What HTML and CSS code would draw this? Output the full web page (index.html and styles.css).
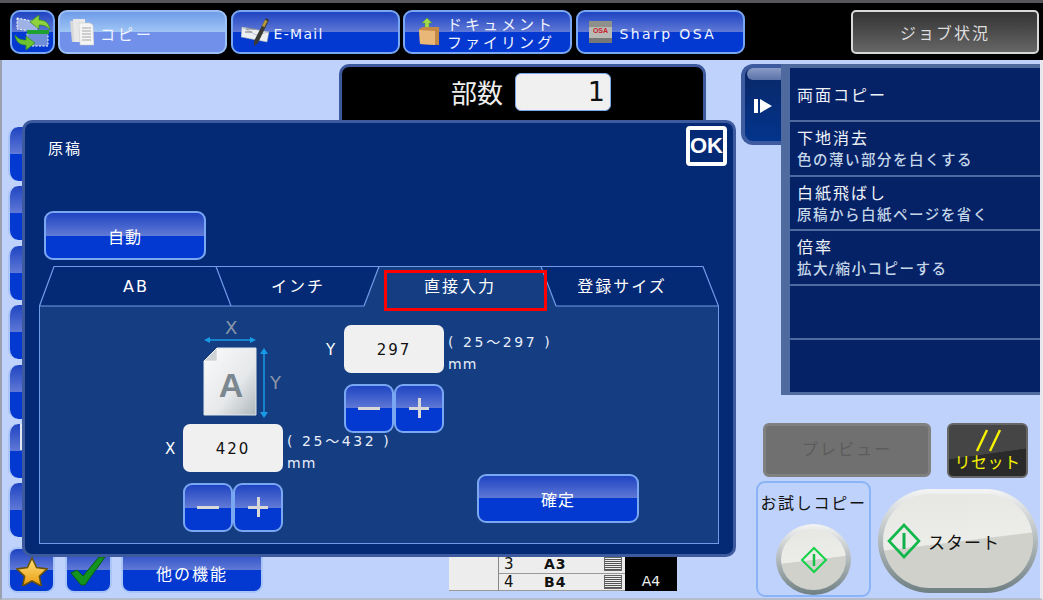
FILE: index.html
```html
<!DOCTYPE html>
<html lang="ja">
<head>
    <meta charset="UTF-8">
    <title>原稿 - 直接入力</title>
    <link rel="stylesheet" href="styles.css">
</head>
<body>
<div class="screen">
    <div class="strip"></div>
    <header class="topbar">
        <button class="gloss swap">
            <svg width="39" height="38" viewBox="0 0 39 38">
                <path d="M4 5l20 4v10L4 16z" fill="#9fb2e6" stroke="#fff" stroke-dasharray="2 1.500"/>
                <path d="M14 19h21v14H14z" fill="#6f8ed8" stroke="#fff" stroke-dasharray="2 1.500"/>
                <path d="M14 17h22v4H14z" fill="#1fa12f"/>
                <path d="M37 17C36 9 31 7 26 7V2l-9 7 9 7v-4c5 0 8 1 11 5z" fill="#8fd23c" stroke="#2f8a1f" stroke-width=".7"/>
                <path d="M2 22c1 8 6 10 11 10v5l9-7-9-7v4c-5 0-8-1-11-5z" fill="#6cc22f" stroke="#2f8a1f" stroke-width=".7"/>
            </svg>
        </button>
        <button class="gloss tab active">
            <svg width="26" height="28" viewBox="0 0 26 28">
                <path d="M2 3l11-1 2 21-11 1z" fill="#d8d8d8"/>
                <path d="M5 1h12l1 23H6z" fill="#e8e8e8"/>
                <path d="M11 5h11l3 2 1 20H12z" fill="#f4f4f4" stroke="#c4c4c4" stroke-width=".5"/>
                <path d="M14 10h9M14 13h9M14 16h9M14 19h9M14 22h9" stroke="#a8a8a8"/>
            </svg>
            <span class="tab-label copy-label">コピー</span>
        </button>
        <button class="gloss tab">
            <svg width="30" height="28" viewBox="0 0 30 28">
                <path d="M1 9l27 5-2 10-26-5z" fill="#eceff2" stroke="#9aa" stroke-width=".5"/>
                <path d="M1 9l14 8 13-3" fill="none" stroke="#aab" stroke-width=".7"/>
                <path d="M5 11h9M4 14h7" stroke="#777"/>
                <path d="M25 0l3 2-11 23-4 3 0-5z" fill="#3a3a34"/>
                <path d="M24 2l2.500 1-3 6-2.500-1z" fill="#b99a3a"/>
            </svg>
            <span class="tab-label mail-label">E-Mail</span>
        </button>
        <button class="gloss tab">
            <svg class="folder" width="22" height="30" viewBox="0 0 22 30">
                <path d="M9 1l5 5h-3v6H7V6H4z" fill="#a3d84a" stroke="#5c9a2c" stroke-width=".5"/>
                <path d="M1 12l4-2h16v18L2 27z" fill="#c48a45"/>
                <path d="M1 13l16 1v14L2 27z" fill="#e9b777"/>
            </svg>
            <span class="tab-label two-line">ドキュメント<br>ファイリング</span>
        </button>
        <button class="gloss tab">
            <svg class="osa" width="23" height="22" viewBox="0 0 23 22">
                <rect width="23" height="22" fill="#b9b9b6"/>
                <rect width="23" height="6" fill="#8f8f8c"/>
                <rect y="17" width="23" height="5" fill="#777"/>
                <text x="11.5" y="12" class="osa-mark">OSA</text>
            </svg>
            <span class="tab-label osa-label">Sharp OSA</span>
        </button>
        <button class="job">ジョブ状況</button>
    </header>

    <main class="main">
        <section class="left">
            <div class="side-list">
                <div class="gloss side"></div>
                <div class="gloss side"></div>
                <div class="gloss side"></div>
                <div class="gloss side"></div>
                <div class="gloss side"></div>
                <div class="gloss side peek"></div>
                <div class="gloss side"></div>
            </div>
            <div class="fav-row">
                <div class="gloss fav">
                    <svg width="32" height="29" viewBox="0 0 32 29">
                        <defs>
                            <linearGradient id="starFill" x1="0" y1="0" x2="0" y2="1">
                                <stop offset="0" stop-color="#ffe27a"/>
                                <stop offset="1" stop-color="#e89a10"/>
                            </linearGradient>
                        </defs>
                        <path d="M16 1l4.600 9.600 10.400 1.400-7.600 7.200 1.900 9.800-9.300-5-9.300 5 1.900-9.800L1 12l10.400-1.400z" fill="url(#starFill)" stroke="#6a5208" stroke-width="1.600"/>
                    </svg>
                </div>
                <div class="gloss fav">
                    <svg width="36" height="30" viewBox="0 0 36 30">
                        <path d="M1 17l6-3 6 6L29 1h6L15 29h-4z" fill="#12941e" stroke="#0a5a12"/>
                    </svg>
                </div>
                <div class="gloss other">他の機能</div>
            </div>
        </section>

        <section class="center">
            <div class="count-box">
                <span class="count-label">部数</span>
                <span class="count-input">1</span>
            </div>
            <div class="paper-table">
                <div class="paper-blank"></div>
                <div class="paper-rows">
                    <div class="paper-row"><span class="num">3</span><span class="size">A3</span><span class="tray"></span></div>
                    <div class="paper-row"><span class="num">4</span><span class="size">B4</span><span class="tray"></span></div>
                </div>
                <div class="paper-current">A4</div>
            </div>
        </section>

        <section class="right">
            <div class="panel-wrap">
                <div class="handle">
                    <svg width="18" height="14" viewBox="0 0 18 14"><path d="M0 0h4v14H0zM6 0l12 7-12 7z" fill="#fff"/></svg>
                </div>
                <div class="func-list">
                    <div class="func single"><div class="func-title">両面コピー</div></div>
                    <div class="func"><div class="func-title">下地消去</div><div class="func-sub">色の薄い部分を白くする</div></div>
                    <div class="func"><div class="func-title">白紙飛ばし</div><div class="func-sub">原稿から白紙ページを省く</div></div>
                    <div class="func"><div class="func-title">倍率</div><div class="func-sub">拡大/縮小コピーする</div></div>
                    <div class="func"></div>
                    <div class="func"></div>
                </div>
            </div>
            <div class="action-row">
                <div class="preview">プレビュー</div>
                <div class="reset">
                    <svg class="reset-mark" width="30" height="24" viewBox="0 0 30 24">
                        <path d="M14 2L4 23M27 2L17 23" stroke="#f7f200" stroke-width="2.400"/>
                    </svg>
                    <span>リセット</span>
                </div>
            </div>
            <div class="start-row">
                <div class="trial">
                    <div class="trial-label">お試しコピー</div>
                    <div class="start-face round">
                        <svg width="28" height="28" viewBox="0 0 28 28">
                            <path d="M14 2l12 12-12 12L2 14z" fill="none" stroke="#12d24a" stroke-width="2"/>
                            <path d="M14 8v12" stroke="#12c046" stroke-width="2.500"/>
                        </svg>
                    </div>
                </div>
                <div class="start-face big">
                    <svg width="34" height="36" viewBox="0 0 34 36">
                        <path d="M17 2l15 16-15 16L2 18z" fill="none" stroke="#10b84a" stroke-width="2.600"/>
                        <path d="M17 10v16" stroke="#10b04a" stroke-width="3"/>
                    </svg>
                    <span class="start-text">スタート</span>
                </div>
            </div>
        </section>
    </main>

    <div class="dialog">
        <div class="dialog-head">
            <div class="dialog-title">原稿</div>
            <div class="ok">OK</div>
        </div>
        <button class="gloss wide-btn auto">自動</button>

        <div class="tabs">
            <svg class="tab-lines" width="680" height="41" viewBox="0 0 680 41">
                <path d="M325 40L340 .5H502L517 40z" fill="#143d82"/>
                <path d="M.5 40L15 .5H664L679.500 40M177 .5L192 40M340 .5L325 40M502 .5L517 40M0 40H325M517 40H680" fill="none" stroke="#6f9be8" stroke-width="1.200"/>
            </svg>
            <div class="tab2">AB</div>
            <div class="tab2">インチ</div>
            <div class="tab2">直接入力</div>
            <div class="tab2">登録サイズ</div>
            <div class="red-mark"></div>
        </div>

        <div class="panel">
            <div class="col-x">
                <svg class="doc" width="90" height="100" viewBox="0 0 90 100">
                    <defs>
                        <linearGradient id="sheet" x1="0" y1="0" x2="1" y2="1">
                            <stop offset="0" stop-color="#fbfbfb"/>
                            <stop offset=".6" stop-color="#e6e8ea"/>
                            <stop offset="1" stop-color="#aeb8bc"/>
                        </linearGradient>
                    </defs>
                    <text x="25" y="16" class="dim">X</text>
                    <path d="M8 22h44" stroke="#1a9be6" stroke-width="1.500"/>
                    <path d="M4 22l6-3v6zM56 22l-6-3v6z" fill="#1a9be6"/>
                    <path d="M17 30H56V97H4V43z" fill="url(#sheet)" stroke="#dfe6ea"/>
                    <path d="M4 43H17V30z" fill="#cfd3d6" stroke="#fff" stroke-width=".5"/>
                    <text x="31" y="79" class="sheet-a">A</text>
                    <path d="M64 34v62" stroke="#1a9be6" stroke-width="1.500"/>
                    <path d="M64 30l-4 6h8zM64 100l-4-6h8z" fill="#1a9be6"/>
                    <text x="70" y="71" class="dim">Y</text>
                </svg>
                <div class="field-row x-row">
                    <span class="axis">X</span>
                    <span class="num-input">420</span>
                    <div class="range">( 25～432 )<br><span class="unit">mm</span></div>
                </div>
                <div class="stepper x-step">
                    <button class="gloss step"><i class="minus"></i></button>
                    <button class="gloss step"><i class="plus"></i></button>
                </div>
            </div>
            <div class="col-y">
                <div class="field-row">
                    <span class="axis">Y</span>
                    <span class="num-input">297</span>
                    <div class="range">( 25～297 )<br><span class="unit">mm</span></div>
                </div>
                <div class="stepper y-step">
                    <button class="gloss step"><i class="minus"></i></button>
                    <button class="gloss step"><i class="plus"></i></button>
                </div>
            </div>
            <button class="gloss wide-btn confirm">確定</button>
        </div>
    </div>
</div>
</body>
</html>
```

FILE: styles.css
```css
* {
    box-sizing: border-box;
}
html, body {
    margin: 0;
    height: 100%;
    overflow: hidden;
}
body {
    font-family: "DejaVu Sans", "Noto Sans CJK JP", sans-serif;
    color: #fff;
}
button {
    font-family: inherit;
    color: inherit;
    margin: 0;
    padding: 0;
}
.screen {
    position: relative;
    width: 1043px;
    height: 600px;
    background: #bfd2fb;
    overflow: hidden;
}
.strip {
    height: 3px;
    background: #55555b;
}

/* glossy blue button */
.gloss {
    border: 2px solid #7aa7f2;
    border-radius: 9px;
    background: linear-gradient(#1f44c2 0%, #6079d6 50%, #0339d0 50%, #0339d0 100%);
}

.topbar {
    display: flex;
    align-items: flex-start;
    gap: 3.5px;
    height: 57px;
    padding: 7px 4px 6px 10px;
    background: #000;
}
.swap {
    width: 45px;
    height: 44px;
    margin-right: -.5px;
    display: flex;
    align-items: center;
    justify-content: center;
    border-radius: 10px;
}
.tab {
    display: flex;
    align-items: center;
    width: 169px;
    height: 44px;
    padding-left: 8px;
    font-size: 14px;
}
.tab svg {
    flex: none;
}
.tab.active {
    background: linear-gradient(#6f9ce8 0%, #a0c6f5 50%, #7090ea 50%, #7090ea 100%);
    border-color: #9dc0f6;
}
.tab .folder {
    margin-left: 5px;
}
.tab .osa {
    margin-left: 3px;
}
.tab-label {
    margin-top: 3px;
    color: #f0f4ff;
}
.copy-label {
    margin-left: 6px;
    font-size: 15px;
    letter-spacing: 3px;
}
.mail-label {
    margin-left: 3px;
    letter-spacing: 1.3px;
}
.osa-label {
    margin-left: 8px;
    letter-spacing: 2.400px;
}
.two-line {
    margin-left: 7px;
    font-size: 15px;
    line-height: 18px;
    letter-spacing: 3px;
    text-align: center;
}
.osa-mark {
    font: bold 7px "Liberation Sans", sans-serif;
    fill: #c8222a;
    text-anchor: middle;
}
.job {
    width: 188px;
    height: 44px;
    margin-left: auto;
    border: 2px solid #d8d8d8;
    border-radius: 5px;
    background: linear-gradient(#333, #666);
    font-size: 16px;
    letter-spacing: 2px;
    color: #ddd;
}

.main {
    display: flex;
    height: 540px;
    border-left: 2px solid #9aa0b0;
    border-right: 3px solid #e8e8ee;
    border-bottom: 2px solid #b4bccc;
}

/* left column, mostly covered by the dialog */
.left {
    width: 337px;
    padding: 67px 0 0 6px;
}
.side-list {
    display: flex;
    flex-direction: column;
    gap: 5.4px;
}
.side {
    position: relative;
    width: 60px;
    height: 54px;
    border: 0;
    border-left: 2px solid #a9c4f7;
    border-radius: 10px 0 0 10px;
}
.peek::after {
    content: "";
    position: absolute;
    left: 10px;
    top: 0;
    width: 10px;
    height: 26px;
    background: #dfe6f4;
}
.fav-row {
    display: flex;
    gap: 9.5px;
    margin-top: 10px;
}
.fav, .other {
    height: 46px;
    border-color: #a9c4f7;
}
.fav {
    position: relative;
    width: 47px;
    display: flex;
    align-items: flex-end;
    justify-content: center;
    padding-bottom: 5px;
}
.other {
    width: 142px;
    padding-top: 12px;
    font-size: 16px;
    letter-spacing: 2px;
    text-align: center;
}

/* centre column */
.center {
    width: 402px;
    padding-top: 4px;
}
.count-box {
    display: flex;
    align-items: center;
    width: 367px;
    height: 62px;
    padding: 0 0 10px 109px;
    background: #000;
    border: 3px solid #3e5a9f;
    border-bottom: 0;
    border-radius: 10px 10px 0 0;
}
.count-label {
    font-size: 26px;
    color: #eee;
}
.count-input {
    width: 96px;
    height: 38px;
    margin-left: 12px;
    padding-right: 5px;
    background: #f0f0f0;
    border: 1px solid #7aa7f2;
    border-radius: 6px;
    color: #111;
    font-size: 27px;
    line-height: 36px;
    text-align: right;
}
.paper-table {
    display: flex;
    width: 228px;
    height: 35px;
    margin: 430px 0 0 110px;
    color: #111;
}
.paper-blank {
    width: 49px;
    background: #ededed;
    border-bottom: 1px solid #999;
}
.paper-rows {
    width: 127px;
    border-left: 1px solid #888;
    background: #ededed;
}
.paper-row {
    display: flex;
    align-items: center;
    height: 17.5px;
    padding-left: 5px;
    border-bottom: 1px solid #999;
    font-size: 14px;
}
.num {
    width: 40px;
    font-size: 15px;
}
.size {
    width: 60px;
    font-weight: bold;
    letter-spacing: 1px;
}
.tray {
    width: 18px;
    height: 14px;
    background: repeating-linear-gradient(#eee 0 1px, #555 1px 2px);
    border: 1px solid #666;
}
.paper-current {
    width: 52px;
    padding: 17px 0 0;
    background: #000;
    color: #f0f0f0;
    font-size: 14px;
    text-align: center;
}

/* right column */
.right {
    width: 299px;
    padding-top: 4px;
}
.panel-wrap {
    display: flex;
    height: 331px;
}
.handle {
    position: relative;
    display: flex;
    align-items: center;
    justify-content: center;
    width: 40px;
    height: 81px;
    padding-top: 2px;
    background: linear-gradient(#0a2766, #03348c);
    border: 4px solid #3d5b9e;
    border-right: 0;
    border-radius: 12px 0 0 12px;
}
.handle::before {
    content: "";
    position: absolute;
    top: 0;
    left: 2px;
    right: 0;
    height: 12px;
    background: linear-gradient(#8b9cc6, #5a72a8);
    border-radius: 6px 0 0 6px;
}
.func-list {
    flex: 1;
    display: flex;
    flex-direction: column;
    gap: 2px;
    padding: 4px 0 2px 9px;
    background: #4f6a9f;
}
.func {
    flex: none;
    height: 52.4px;
    padding: 6px 0 0 7px;
    background: #052266;
}
.func.single {
    padding-top: 17px;
}
.func-title {
    font-size: 16px;
    line-height: 22px;
    letter-spacing: 2px;
    color: #f0f4fa;
}
.func-sub {
    font-size: 14.5px;
    line-height: 21px;
    font-weight: 500;
    letter-spacing: 1.500px;
    color: #c4d6e8;
    white-space: nowrap;
}
.action-row {
    display: flex;
    align-items: flex-start;
    gap: 16px;
    margin-top: 28px;
    padding-left: 22px;
}
.preview {
    width: 168px;
    height: 54px;
    background: #707070;
    border: 3px solid #808080;
    border-radius: 6px;
    color: #5c5c5c;
    font-size: 16px;
    letter-spacing: 2px;
    line-height: 48px;
    text-align: center;
}
.reset {
    display: flex;
    flex-direction: column;
    align-items: center;
    width: 81px;
    height: 55px;
    padding-top: 3px;
    background: linear-gradient(172deg, #454545 55%, #2a2a2a 56%);
    border: 2px solid #666;
    border-radius: 6px;
    color: #f7f200;
    font-size: 16px;
    line-height: 22px;
    letter-spacing: .5px;
}
.reset-mark {
    flex: none;
}
.start-row {
    display: flex;
    gap: 7px;
    margin-top: 3px;
    padding-left: 15px;
}
.trial {
    display: flex;
    flex-direction: column;
    align-items: center;
    width: 115px;
    height: 116px;
    padding-top: 10px;
    border: 2px solid #8ab4f6;
    border-radius: 9px;
}
.trial-label {
    color: #111;
    font-size: 16px;
    line-height: 22px;
    letter-spacing: 1.700px;
    white-space: nowrap;
}
.start-face {
    display: flex;
    align-items: center;
    border: 5px solid transparent;
    background:
        linear-gradient(173deg, #e6e6e2 0%, #ecece8 50%, #d0d1cb 51%) padding-box,
        linear-gradient(#f4f4f4, #6f7f82) border-box;
}
.start-face.round {
    justify-content: center;
    width: 75px;
    height: 75px;
    margin-top: 9px;
    border-radius: 50%;
}
.start-face.big {
    width: 160px;
    height: 104px;
    margin-top: 8px;
    padding-left: 4px;
    border-radius: 52px;
}
.start-text {
    margin-left: 7px;
    color: #111;
    font-size: 17px;
    letter-spacing: 1px;
}

/* modal dialog over the page */
.dialog {
    position: absolute;
    left: 22px;
    top: 120px;
    width: 714px;
    height: 437px;
    padding: 3px 14px 10px 14px;
    background: #052a75;
    border: 3px solid #3e5a9f;
    border-radius: 10px;
}
.dialog-head {
    display: flex;
    justify-content: space-between;
    height: 85px;
}
.dialog-title {
    padding: 11px 0 0 9px;
    font-size: 15px;
    line-height: 24px;
    letter-spacing: 2px;
}
.ok {
    width: 41px;
    height: 40px;
    margin-right: -8px;
    border: 4px solid #fff;
    border-radius: 4px;
    background: #052a75;
    font: bold 22px/31px "Liberation Sans", sans-serif;
    text-align: center;
}
.wide-btn {
    display: block;
    width: 162px;
    height: 49px;
    font-size: 16px;
    letter-spacing: 1px;
}
.auto {
    margin-left: 5px;
}
.tabs {
    position: relative;
    display: flex;
    height: 40px;
    margin-top: 6px;
    padding-left: 16px;
}
.tab-lines {
    position: absolute;
    left: 0;
    top: 0;
}
.tab2 {
    position: relative;
    width: 162px;
    font-size: 16px;
    letter-spacing: 2px;
    line-height: 41px;
    text-align: center;
}
.red-mark {
    position: absolute;
    left: 345px;
    top: 4px;
    width: 163px;
    height: 41px;
    border: 3px solid #f00;
    z-index: 2;
}
.panel {
    display: flex;
    height: 238px;
    padding-left: 125px;
    background: #143d82;
    border: 1px solid #6f9be8;
    border-top: 0;
}
.col-x {
    flex: none;
    width: 161px;
}
.doc {
    display: block;
    margin: 12px 0 0 35px;
}
.dim {
    font-size: 18px;
    fill: #8b95a8;
}
.sheet-a {
    font-size: 34px;
    font-weight: bold;
    fill: #7c8890;
    text-anchor: middle;
    font-family: "Liberation Sans", sans-serif;
}
.field-row {
    display: flex;
    align-items: flex-start;
    height: 48px;
    white-space: nowrap;
}
.x-row {
    margin-top: 6px;
}
.axis {
    flex: none;
    width: 18px;
    font-size: 15px;
    line-height: 50px;
}
.num-input {
    flex: none;
    width: 100px;
    height: 48px;
    background: #f0f0f0;
    border-radius: 7px;
    color: #111;
    font-size: 15px;
    font-weight: 500;
    letter-spacing: 2px;
    line-height: 50px;
    text-align: center;
}
.range {
    margin: 6px 0 0 4px;
    font-size: 14px;
    line-height: 22px;
    letter-spacing: 2.600px;
    color: #e8eefa;
}
.unit {
    letter-spacing: 1px;
}
.stepper {
    display: flex;
    width: 100px;
}
.x-step {
    margin: 11px 0 0 18px;
}
.y-step {
    margin: 11px 0 0 18px;
}
.step {
    display: flex;
    align-items: center;
    justify-content: center;
    flex: 1;
    height: 49px;
    padding-bottom: 1px;
}
.step i {
    position: relative;
    display: block;
    height: 3px;
    background: #d8d8d8;
}
.minus {
    width: 22px;
}
.plus {
    width: 20px;
}
.plus::after {
    content: "";
    position: absolute;
    left: 8.5px;
    top: -8.500px;
    width: 3px;
    height: 20px;
    background: #d8d8d8;
}
.col-y {
    flex: none;
    width: 151px;
    padding-top: 19px;
}
.confirm {
    flex: none;
    height: 49px;
    margin-top: 168px;
}
```
